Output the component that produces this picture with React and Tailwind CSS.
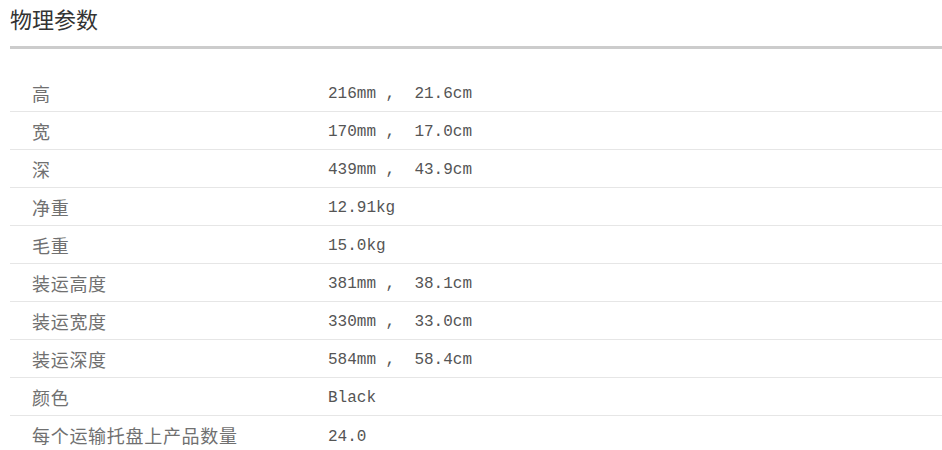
import React from 'react';

const rows = [
  ['高', '216mm ,  21.6cm'],
  ['宽', '170mm ,  17.0cm'],
  ['深', '439mm ,  43.9cm'],
  ['净重', '12.91kg'],
  ['毛重', '15.0kg'],
  ['装运高度', '381mm ,  38.1cm'],
  ['装运宽度', '330mm ,  33.0cm'],
  ['装运深度', '584mm ,  58.4cm'],
  ['颜色', 'Black'],
  ['每个运输托盘上产品数量', '24.0'],
];

export default function App() {
  return (
    <div className="min-h-screen bg-white pl-[10px]" style={{ fontFamily: "'Liberation Sans', 'Noto Sans CJK SC', sans-serif" }}>

      {/* Section title */}
      <h2 className="h-[46px] flex items-center text-[22px] leading-none text-[#333] font-normal pb-[5px]">
        物理参数
      </h2>
      <div className="h-[3px] bg-[#cccccc]" />

      {/* Spec table */}
      <div className="mt-[25px]">
        {rows.map(([label, value], i) => (
          <div
            key={label}
            className={`flex items-center h-[38px] ${i < rows.length - 1 ? 'border-b border-[#e6e6e6]' : ''}`}
          >
            <div className="w-[318px] pl-[22px] text-[18px] leading-none tracking-[0.7px] text-[#707070]" style={{ fontFamily: "'Noto Sans CJK SC', sans-serif" }}>
              {label}
            </div>
            <div className="pt-[3px] text-[16px] leading-none text-[#555] whitespace-pre" style={{ fontFamily: "'Liberation Mono', monospace" }}>
              {value}
            </div>
          </div>
        ))}
      </div>
    </div>
  );
}
